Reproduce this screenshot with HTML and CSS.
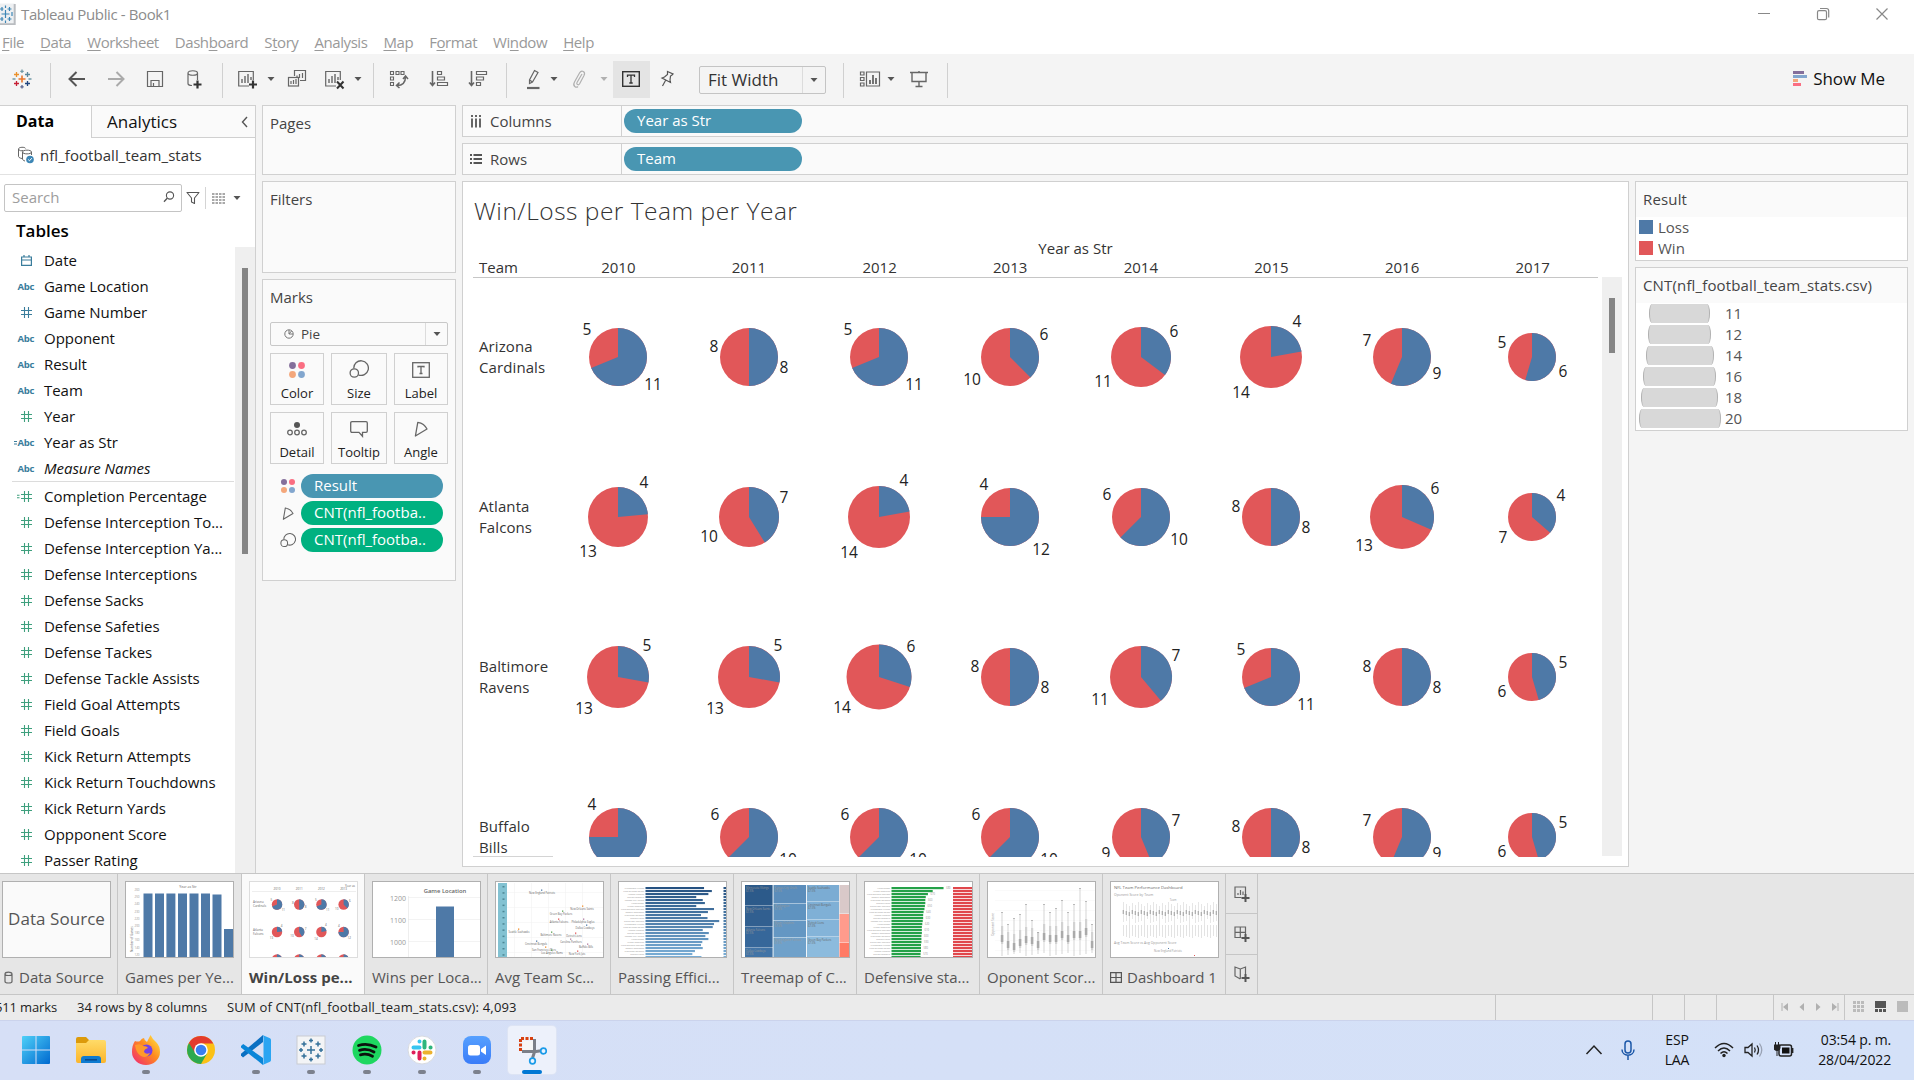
FILE: index.html
```html
<!DOCTYPE html>
<html lang="en">
<head>
<meta charset="utf-8">
<title>Tableau Public - Book1</title>
<link rel="stylesheet" href="styles.css">
</head>
<body>
<svg class="defs" width="0" height="0" aria-hidden="true">
  <defs>
    <linearGradient id="gWin" x1="0" y1="0" x2="1" y2="1"><stop offset="0" stop-color="#4fd0f8"/><stop offset="1" stop-color="#0069cf"/></linearGradient>
    <linearGradient id="gFold" x1="0" y1="0" x2="0" y2="1"><stop offset="0" stop-color="#ffdb68"/><stop offset="1" stop-color="#fbb52b"/></linearGradient>
    <linearGradient id="gFox" x1="1" y1="0" x2="0" y2="1"><stop offset="0" stop-color="#fff04a"/><stop offset=".45" stop-color="#ff8b1e"/><stop offset="1" stop-color="#f0207a"/></linearGradient>
    <linearGradient id="gZoom" x1="0" y1="0" x2="0" y2="1"><stop offset="0" stop-color="#56a0ff"/><stop offset="1" stop-color="#3a7cf8"/></linearGradient>
    <symbol id="dots" viewBox="0 0 18 18"><circle cx="4.500" cy="4.500" r="3.400" fill="#846f9b"/><circle cx="13.500" cy="4.500" r="3.400" fill="#fa6e82"/><circle cx="4.500" cy="13.500" r="3.400" fill="#f4a77b"/><circle cx="13.500" cy="13.500" r="3.400" fill="#82a6ce"/></symbol>
    <symbol id="size" viewBox="0 0 20 20"><g fill="none" stroke="#666" stroke-width="1.300"><path d="M4.800 9.500A7.300 7.300 0 1 1 9.300 15.800"/><circle cx="5.300" cy="14" r="4.200"/></g></symbol>
    <symbol id="angle" viewBox="0 0 18 18"><path d="M5.800 2.300C10 3 13.300 5.500 15 9L3.400 16Z" fill="none" stroke="#666" stroke-width="1.300" stroke-linejoin="round"/></symbol>
    <symbol id="caret" viewBox="0 0 10 6"><path d="M1.500 1H8.500L5 5Z" fill="currentColor"/></symbol>
    <symbol id="sheet" viewBox="0 0 22 22"><path d="M13 18H2.700V3.500H17.300V12" fill="none" stroke="#666" stroke-width="1.200"/><path d="M6 15v-4M9 15V8M12 15V6M15 12V9" stroke="#666" stroke-width="1.400"/></symbol>
  </defs>
</svg>

<header class="titlebar">
  <svg class="app-icon" width="16" height="22" viewBox="0 0 16 22"><path d="M0 .5H14.500V21H0" fill="#eef0f2"/><path d="M14.700 1V21.300H0" fill="none" stroke="#b9bcc0" stroke-width="2"/><path d="M5.500 7v8M1.500 11h8M2 4v4M0 6h3.500M9.500 4v4M7.500 6h4M2 14v4M0 16h3.500M9.500 14v4M7.500 16h4M12 9v4M5.500 2.500v2.500M5.500 17.500v2.500" stroke="#3c86b5" stroke-width="1.200"/></svg>
  <span class="app-title">Tableau Public - Book1</span>
  <div class="win-buttons">
    <svg width="14" height="14" viewBox="0 0 14 14"><path d="M1 6.500H13" stroke="#888" stroke-width="1"/></svg>
    <svg width="14" height="14" viewBox="0 0 14 14" fill="none" stroke="#888" stroke-width="1.200"><rect x="1.500" y="3.700" width="9" height="9" rx="1.500"/><path d="M4 1.500H10.500A2.300 2.300 0 0 1 12.700 3.800V10.500"/></svg>
    <svg width="14" height="14" viewBox="0 0 14 14"><path d="M1.500 1.500L12.500 12.500M12.500 1.500L1.500 12.500" stroke="#888" stroke-width="1.200"/></svg>
  </div>
</header>
<nav class="menubar">
  <span><u>F</u>ile</span><span><u>D</u>ata</span><span><u>W</u>orksheet</span><span>Dash<u>b</u>oard</span><span>S<u>t</u>ory</span><span><u>A</u>nalysis</span><span><u>M</u>ap</span><span>F<u>o</u>rmat</span><span>Wi<u>n</u>dow</span><span><u>H</u>elp</span>
</nav>

<div class="toolbar">
  <svg class="ic m11" viewBox="0 0 22 22" stroke-width="1.300"><path d="M11 7.500v7M7.500 11h7" stroke="#e8762c" stroke-width="1.600"/><path d="M5.500 4v5M3 6.500h5" stroke="#eb912b"/><path d="M16.500 4v5M14 6.500h5" stroke="#59879b"/><path d="M5.500 13v5M3 15.500h5" stroke="#c72035"/><path d="M16.500 13v5M14 15.500h5" stroke="#1f447e"/><path d="M11 1.500v3.500M9.300 3.300h3.400M1.500 11h3M17.500 11h3" stroke="#7099a6"/><path d="M11 17v3.500M9.300 18.800h3.400" stroke="#5b6591"/></svg>
  <i class="sep m17"></i>
  <svg class="ic m15" viewBox="0 0 22 22"><path d="M19 11H4M10.500 4L3.500 11L10.500 18" fill="none" stroke="#555" stroke-width="2"/></svg>
  <svg class="ic m17" viewBox="0 0 22 22"><path d="M3 11H18M11.500 4L18.500 11L11.500 18" fill="none" stroke="#aaa" stroke-width="2"/></svg>
  <svg class="ic m17" viewBox="0 0 22 22"><path d="M3.500 3.500H18.500V18.500H3.500ZM7 18V12.500H15V18M9.500 18V15" fill="none" stroke="#666" stroke-width="1.200"/></svg>
  <svg class="ic m17" viewBox="0 0 22 22"><path d="M9 17.500C6 17.500 5 16 5 15.500V5C5 2 14.500 2 14.500 5V12M5 5C5 8 14.500 8 14.500 5" fill="none" stroke="#666" stroke-width="1.200"/><path d="M14.500 12.500v8M10.500 16.500h8" stroke="#333" stroke-width="2.200"/></svg>
  <i class="sep m17"></i>
  <svg class="ic m13" viewBox="0 0 22 22"><use href="#sheet" width="22" height="22"/><path d="M17 12.500v8M13 16.500h8" stroke="#333" stroke-width="2.200"/></svg>
  <svg class="ct m8"><use href="#caret"/></svg>
  <svg class="ic m9" viewBox="0 0 22 22" fill="none" stroke="#666" stroke-width="1.200"><path d="M9.500 8V2.500H20.500V12.500H15"/><rect x="3.500" y="9.500" width="10" height="8.500"/><path d="M12 10V7.500M14.500 10V6M17.500 10V5M6 16v-3M8.500 16v-4M11 16v-5"/></svg>
  <svg class="ic m16" viewBox="0 0 22 22"><use href="#sheet" width="22" height="22"/><path d="M14 13.500l6.500 7M20.500 13.500l-6.500 7" stroke="#333" stroke-width="2"/></svg>
  <svg class="ct m8"><use href="#caret"/></svg>
  <i class="sep m10"></i>
  <svg class="ic m14" viewBox="0 0 22 22" fill="none" stroke="#666" stroke-width="1.100"><path d="M2.500 3.500h3v3h-3ZM8 3.500h3v3h-3ZM13 3.500h3v3h-3ZM2.500 9h3v3h-3ZM2.500 14.500h3v3h-3Z"/><path d="M9 17.500C15 17.500 17.500 14 17.500 8.500M15 11L17.500 8L20 11M11.500 14.500L8.500 17.500L11.500 20" stroke-width="1.500"/></svg>
  <svg class="ic m18" viewBox="0 0 22 22" fill="none" stroke="#666" stroke-width="1.200"><path d="M4.500 3v14M2 14.500L4.500 17.500L7 14.500" stroke-width="1.600"/><path d="M9.500 3.500h4v3h-4ZM9.500 9h7v3h-7ZM9.500 14.500h10v3h-10Z"/></svg>
  <svg class="ic m17" viewBox="0 0 22 22" fill="none" stroke="#666" stroke-width="1.200"><path d="M4.500 3v14M2 14.500L4.500 17.500L7 14.500" stroke-width="1.600"/><path d="M9.500 3.500h10v3h-10ZM9.500 9h7v3h-7ZM9.500 14.500h4v3h-4Z"/></svg>
  <i class="sep m17"></i>
  <svg class="ic m15" viewBox="0 0 22 22"><path d="M12.500 2.500L16 4.500L10.500 14L7.500 15.500L7.500 12ZM7.500 12L10.500 14" fill="none" stroke="#666" stroke-width="1.200"/><path d="M5 20H17.500" stroke="#666" stroke-width="2.200"/></svg>
  <svg class="ct m5"><use href="#caret"/></svg>
  <svg class="ic m9" viewBox="0 0 22 22"><path d="M14 6L9 14.500C8 16.500 10.500 17.500 11.500 16L16 7.500C18 3.500 13.500 1.500 11.500 5L6.500 14C4 18.500 8.500 20 10 18.500" fill="none" stroke="#b0b0b0" stroke-width="1.200"/></svg>
  <svg class="ct off m9"><use href="#caret"/></svg>
  <span class="tbtn m4"><svg width="18" height="16" viewBox="0 0 18 16"><rect x=".7" y=".7" width="16.600" height="14.600" fill="none" stroke="#333" stroke-width="1.400"/><path d="M5.500 6V4.200H12.500V6M9 4.200V12M7.300 12h3.400" fill="none" stroke="#333" stroke-width="1.300"/></svg></span>
  <svg class="ic m6" viewBox="0 0 22 22"><path d="M11.500 3.500L17 6L16 7L14.500 8L14 12L14.500 14.500L6 10L8.500 9L11.500 6.500ZM9.500 12.500L6.500 18" fill="none" stroke="#555" stroke-width="1.200"/></svg>
  <span class="fit m21"><span>Fit Width</span><b><svg class="ct"><use href="#caret"/></svg></b></span>
  <i class="sep m17"></i>
  <svg class="ic m15" viewBox="0 0 22 22" fill="none" stroke="#666" stroke-width="1.200"><path d="M1.500 4h3.500v3h-3.500ZM1.500 9.500h3.500v3h-3.500ZM1.500 15h3.500v3h-3.500ZM7.500 4h13v14h-13Z"/><path d="M11 16v-4M14 16V7M17 16v-6" stroke-width="1.800"/></svg>
  <svg class="ct m5"><use href="#caret"/></svg>
  <svg class="ic m12" viewBox="0 0 22 22" fill="none" stroke="#666" stroke-width="1.400"><path d="M2 4.500H20M4 5V13.500H18V5M11 13.500V18.500M7.500 18.500H14.500"/><path d="M11 3v1.500"/></svg>
  <i class="sep m17"></i>
  <span class="showme"><svg width="14" height="15" viewBox="0 0 14 15"><path fill="#846f9b" d="M0 0h11v3H0z"/><path fill="#82a6ce" d="M0 4h14v3H0z"/><path fill="#f4a77b" d="M0 8h5v3H0z"/><path fill="#fa6e82" d="M0 12h8v3H0z"/></svg>Show Me</span>
</div>

<main class="work">
  <section class="datapane">
    <div class="tabs"><b>Data</b><span class="an">Analytics<svg width="7" height="12" viewBox="0 0 7 12"><path d="M6 1L1.500 6L6 11" fill="none" stroke="#555" stroke-width="1.400"/></svg></span></div>
    <div class="source"><svg width="18" height="18" viewBox="0 0 18 18" fill="none" stroke="#666"><path d="M5 12.500C2 12 1.500 11 1.500 10V3C1.500 .8 8.500 .8 8.500 2.500M1.500 3C2 5 5 5 6 4.500"/><path d="M8 15C6 14.500 5.500 13.500 5.500 13V6C5.500 3.500 14.500 3.500 14.500 6V9M5.500 6C5.500 8.500 14.500 8.500 14.500 6"/><circle cx="13" cy="13.500" r="3.800" fill="#3c86b5" stroke="none"/><path d="M11.200 13.500l1.300 1.300 2.300-2.600" stroke="#fff"/></svg><span>nfl_football_team_stats</span></div>
    <div class="searchrow">
      <div class="search"><span>Search</span><svg width="12" height="12" viewBox="0 0 12 12"><circle cx="7" cy="4.500" r="3.600" fill="none" stroke="#555" stroke-width="1.100"/><path d="M4.200 7.200L1 10.800" stroke="#555" stroke-width="1.300"/></svg></div>
      <svg class="funnel" width="14" height="14" viewBox="0 0 14 14"><path d="M1 1.500H13L8.500 7V12.500L5.500 11V7Z" fill="none" stroke="#555" stroke-width="1.100" stroke-linejoin="round"/></svg>
      <i></i>
      <svg width="13" height="11" viewBox="0 0 13 11"><path d="M0 1h13M0 4h13M0 7h13M0 10h13" stroke="#555" stroke-width="1.100" stroke-dasharray="2.500 1"/></svg>
      <svg class="ct"><use href="#caret"/></svg>
    </div>
    <h2>Tables</h2>
    <div class="fieldwrap"><div class="fields" id="fields"></div><div class="track"><i></i></div></div>
  </section>

  <section class="cards">
    <div class="card pages">Pages</div>
    <div class="card filters">Filters</div>
    <div class="card marks">
      <h3>Marks</h3>
      <div class="pie-select"><svg width="10" height="10" viewBox="0 0 10 10" fill="none" stroke="#777"><circle cx="5" cy="5" r="4.200"/><path d="M5 1V5H9M5 5L7.500 2"/></svg><span>Pie</span><b><svg class="ct"><use href="#caret"/></svg></b></div>
      <div class="mark-grid">
        <div><svg width="18" height="18"><use href="#dots"/></svg>Color</div>
        <div><svg width="20" height="20"><use href="#size"/></svg>Size</div>
        <div><svg width="18" height="18" viewBox="0 0 18 18" fill="none" stroke="#666" stroke-width="1.300"><rect x=".7" y="1.700" width="16.600" height="14.600"/><path d="M6 6.500V5.500H12V6.500M9 5.500V12.500M7.500 12.500h3"/></svg>Label</div>
        <div><svg width="20" height="18" viewBox="0 0 20 18" fill="none" stroke="#666" stroke-width="1.300"><circle cx="10" cy="5" r="3" fill="#555" stroke="none"/><circle cx="3" cy="12.500" r="2.300"/><circle cx="10" cy="12.500" r="2.300"/><circle cx="17" cy="12.500" r="2.300"/></svg>Detail</div>
        <div><svg width="18" height="18" viewBox="0 0 18 18"><path d="M2 1.700H16Q17.300 1.700 17.300 3V11Q17.300 12.300 16 12.300H12.500V16.300L9 12.300H2Q.7 12.300 .7 11V3Q.7 1.700 2 1.700Z" fill="none" stroke="#666" stroke-width="1.300"/></svg>Tooltip</div>
        <div><svg width="18" height="18"><use href="#angle"/></svg>Angle</div>
      </div>
      <div class="mark-pill"><svg width="16" height="16"><use href="#dots"/></svg><span class="blue">Result</span></div>
      <div class="mark-pill"><svg width="15" height="15"><use href="#angle"/></svg><span class="green">CNT(nfl_footba..</span></div>
      <div class="mark-pill"><svg width="16" height="16"><use href="#size"/></svg><span class="green">CNT(nfl_footba..</span></div>
    </div>
  </section>

  <section class="sheet">
    <div class="shelf"><div class="shelf-name"><svg width="12" height="13" viewBox="0 0 12 13"><path d="M2 0v2M6 0v2M10 0v2M2 3.500v9M6 3.500v9M10 3.500v9" stroke="#555" stroke-width="1.800"/></svg>Columns</div><span class="pill">Year as Str</span></div>
    <div class="shelf"><div class="shelf-name"><svg width="12" height="12" viewBox="0 0 12 12"><path d="M0 2h2M0 6h2M0 10h2M3.500 2h9M3.500 6h9M3.500 10h9" stroke="#555" stroke-width="1.800"/></svg>Rows</div><span class="pill">Team</span></div>
    <div class="split">
      <div class="viz">
        <h1>Win/Loss per Team per Year</h1>
        <div class="colfield">Year as Str</div>
        <div class="colheads"><span class="team">Team</span><span>2010</span><span>2011</span><span>2012</span><span>2013</span><span>2014</span><span>2015</span><span>2016</span><span>2017</span></div>
        <div class="bodywrap"><div class="rows" id="rows"></div><div class="vtrack"><i></i></div></div>
      </div>
      <aside class="legends">
        <div class="legend result"><h4>Result</h4><p><i class="loss"></i>Loss</p><p><i class="win"></i>Win</p></div>
        <div class="legend sizes"><h4>CNT(nfl_football_team_stats.csv)</h4><div id="sizes"></div></div>
      </aside>
    </div>
  </section>
</main>

<div class="sheettabs">
  <div class="tab first"><div class="thumb ds">Data Source</div><p><svg width="9" height="13" viewBox="0 0 9 13" fill="none" stroke="#666" stroke-width="1.200"><path d="M1 3V10.500C1 12.500 8 12.500 8 10.500V3C8 .5 1 .5 1 3C1 5 8 5 8 3"/></svg>Data Source</p></div>
  <div class="tab second"><svg class="thumb" id="t1"></svg><p>Games per Ye...</p></div>
  <div class="tab on"><svg class="thumb" id="t2"></svg><p>Win/Loss pe...</p></div>
  <div class="tab"><svg class="thumb" id="t3"></svg><p>Wins per Loca...</p></div>
  <div class="tab"><svg class="thumb" id="t4"></svg><p>Avg Team Sc...</p></div>
  <div class="tab"><svg class="thumb" id="t5"></svg><p>Passing Effici...</p></div>
  <div class="tab"><svg class="thumb" id="t6"></svg><p>Treemap of C...</p></div>
  <div class="tab"><svg class="thumb" id="t7"></svg><p>Defensive sta...</p></div>
  <div class="tab"><svg class="thumb" id="t8"></svg><p>Oponent Scor...</p></div>
  <div class="tab"><svg class="thumb" id="t9"></svg><p><svg width="12" height="11" viewBox="0 0 12 11" fill="none" stroke="#555" stroke-width="1.200"><path d="M.6 .6h10.800v9.800H.6ZM6 .6v9.800M.6 5.500h10.800"/></svg>Dashboard 1</p></div>
  <div class="adders">
    <span><svg width="16" height="16" viewBox="0 0 16 16" fill="none" stroke="#666" stroke-width="1.200"><path d="M7.500 11.500H1V1H11.500V8M4 9V7M6.500 9V4M9 9V5.500"/><path d="M11.500 8v8M7.500 12h8" stroke="#555" stroke-width="2"/></svg></span>
    <span><svg width="16" height="16" viewBox="0 0 16 16" fill="none" stroke="#666" stroke-width="1.200"><path d="M7.500 11.500H1V1H11.500V8M1 6.300H11.500M6.300 1v10.500"/><path d="M11.500 8v8M7.500 12h8" stroke="#555" stroke-width="2"/></svg></span>
    <span><svg width="16" height="16" viewBox="0 0 16 16" fill="none" stroke="#666" stroke-width="1.200"><path d="M6.300 3L1 1V10L6.300 13M6.300 3L11.500 1V8M6.300 3V13"/><path d="M11.500 8v8M7.500 12h8" stroke="#555" stroke-width="2"/></svg></span>
  </div>
</div>

<div class="status">
  <span class="s1">511 marks</span><span class="s2">34 rows by 8 columns</span><span class="s3">SUM of CNT(nfl_football_team_stats.csv): 4,093</span>
  <div class="boxes"><i class="b1"></i><i class="b2"></i><i class="b2"></i><i class="b3"></i>
    <span class="navs"><svg width="8" height="8" viewBox="0 0 8 8"><path d="M1 0v8" stroke="#b0b0b0"/><path d="M7 0v8L2 4z"/></svg><svg width="8" height="8" viewBox="0 0 8 8"><path d="M6 0v8L1.500 4z"/></svg><svg width="8" height="8" viewBox="0 0 8 8"><path d="M2 0v8L6.500 4z"/></svg><svg width="8" height="8" viewBox="0 0 8 8"><path d="M7 0v8" stroke="#b0b0b0"/><path d="M1 0v8L6 4z"/></svg></span>
    <span class="views"><svg width="11" height="11" viewBox="0 0 11 11"><path d="M0 0h3v3H0zM4 0h3v3H4zM8 0h3v3H8zM0 4h3v3H0zM4 4h3v3H4zM8 4h3v3H8zM0 8h3v3H0zM4 8h3v3H4zM8 8h3v3H8z" fill="#bbb"/></svg><svg width="11" height="11" viewBox="0 0 11 11"><path d="M0 0h11v7H0zM0 8h3v3H0zM4 8h3v3H4zM8 8h3v3H8z" fill="#555"/></svg><svg width="11" height="11" viewBox="0 0 11 11"><path d="M0 0h11v11H0z" fill="#bbb"/></svg></span>
  </div>
</div>

<footer class="taskbar">
  <div class="apps">
    <span><svg viewBox="0 0 30 30"><path fill="url(#gWin)" d="M1 2Q1 1 2 1H14.500V14.500H1ZM15.500 1H28Q29 1 29 2V14.500H15.500ZM1 15.500H14.500V29H2Q1 29 1 28ZM15.500 15.500H29V28Q29 29 28 29H15.500Z"/></svg></span>
    <span><svg viewBox="0 0 30 30"><path d="M0 4Q0 2 2 2H10L13 5H28V12H0Z" fill="#dc9a0a"/><path d="M0 8H10L13 5H28Q30 5 30 7V26Q30 28 28 28H2Q0 28 0 26Z" fill="url(#gFold)"/><path d="M5 28V24Q5 21 8 21H22Q25 21 25 24V28Z" fill="#0f7bd0"/><path d="M9 24.800H21" stroke="#0a4a8c" stroke-width="1.500"/></svg></span>
    <span class="run"><svg viewBox="0 0 30 30"><path d="M4 6Q7 7 9 6Q11 3 13 3Q13 5 16 7Q18 3 19.500 0Q22 5 25 7Q29 11 29 17A14 13 0 0 1 1 17Q1 10 4 6Z" fill="url(#gFox)"/><circle cx="15.500" cy="15.500" r="6" fill="#7542e5"/><path d="M4 10Q10 8 12 11Q16 11 17 13Q13 14 13 17Q15 20 19 18Q16 24 10 21Q5 18 4 10Z" fill="#ff9a2a"/></svg></span>
    <span><svg viewBox="0 0 30 30"><circle cx="15" cy="15" r="14" fill="#fbc116"/><path d="M15 15L2.900 8A14 14 0 0 0 15 29L21 18.500Z" fill="#2da94f"/><path d="M15 8.500H27.300A14 14 0 0 0 2.900 8L9.500 18.500Z" fill="#e33b2e"/><circle cx="15" cy="15" r="6.800" fill="#fff"/><circle cx="15" cy="15" r="5.300" fill="#3a7ff0"/></svg></span>
    <span class="run"><svg viewBox="0 0 30 30"><path d="M0 20.500L2 22.500L22 7V0L0 18.800Z" fill="#0a6fc2"/><path d="M0 11L2.200 9L22 23V30L0 12.500Z" fill="#0a86d8"/><path d="M21.500 0L29 3.200Q30 3.700 30 5V25Q30 26.300 29 26.800L21.500 30Q22.500 29 22.500 27V3Q22.500 1 21.500 0Z" fill="#2aa5f2"/></svg></span>
    <span class="run"><svg viewBox="0 0 30 30"><rect x="1" y="1" width="28" height="28" fill="#f3f4f6" stroke="#c9ccd2"/><path d="M15 11v8M11 15h8M8 6.500v5M5.500 9h5M22 6.500v5M19.500 9h5M8 18.500v5M5.500 21h5M22 18.500v5M19.500 21h5M15 3.500v4M13 5.500h4M15 22.500v4M13 24.500h4M5 13v4M3 15h4M25 13v4M23 15h4" stroke="#33709a" stroke-width="1.500"/></svg></span>
    <span class="run"><svg viewBox="0 0 30 30"><circle cx="15" cy="15" r="14.500" fill="#1ed760"/><path d="M6.500 10.500Q15 7.500 24 12M7.500 15.300Q15 13 22 17M8.500 19.800Q15 18 20.500 21.300" fill="none" stroke="#0b120d" stroke-width="2.800" stroke-linecap="round"/></svg></span>
    <span class="run"><svg viewBox="0 0 30 30"><circle cx="15" cy="15" r="14" fill="#fff" stroke="#d7dae0"/><g stroke-width="4" stroke-linecap="round"><path d="M12.500 6.500V6.600M6.500 12.500H12.500" stroke="#36c5f0"/><path d="M17.500 6.500V12.500M23.500 12.500h.1" stroke="#2eb67d"/><path d="M17.500 17.500H23.500M17.500 23.500v.1" stroke="#ecb22e"/><path d="M12.500 17.500V23.500M6.500 17.500h.1" stroke="#e01e5a"/></g></svg></span>
    <span class="run"><svg viewBox="0 0 30 30"><rect x="1" y="1" width="28" height="28" rx="8" fill="url(#gZoom)"/><rect x="6" y="10" width="12" height="10.500" rx="2.500" fill="#fff"/><path d="M19 14L24 10.500V20L19 16.500Z" fill="#fff"/></svg></span>
    <span class="active"><svg viewBox="0 0 30 30"><path d="M4 3.500H16M3.500 4V16" fill="none" stroke="#d8400f" stroke-width="3" stroke-dasharray="3 1.500"/><rect x="6" y="6" width="11" height="10" fill="#f6f6f6"/><path d="M17.500 4V17L15.500 23M5 16.500H19L26 15.500" fill="none" stroke="#7b7f88" stroke-width="3"/><circle cx="26.500" cy="16" r="2.800" fill="#e9f3ff" stroke="#1b9be8" stroke-width="1.700"/><circle cx="15.500" cy="26" r="2.800" fill="#e9f3ff" stroke="#1b9be8" stroke-width="1.700"/></svg></span>
  </div>
  <div class="tray">
    <svg class="chev" width="18" height="12" viewBox="0 0 18 12"><path d="M1.500 10L9 2L16.500 10" fill="none" stroke="#222" stroke-width="1.500"/></svg>
    <svg class="mic" width="14" height="20" viewBox="0 0 14 20"><rect x="4" y="1" width="6" height="12" rx="3" fill="none" stroke="#1b57a8" stroke-width="1.500"/><path d="M1 9.500C1 17 13 17 13 9.500M7 15.500V20" fill="none" stroke="#1b57a8" stroke-width="1.500"/></svg>
    <span class="lang">ESP<br>LAA</span>
    <svg class="wifi" width="20" height="16" viewBox="0 0 20 16"><path d="M1 6Q10 -3 19 6M4 9Q10 3 16 9M6.500 11.500Q10 8 13.500 11.500" fill="none" stroke="#222" stroke-width="1.500"/><circle cx="10" cy="13.500" r="1.700" fill="#222"/></svg>
    <svg class="vol" width="20" height="16" viewBox="0 0 20 16" fill="none" stroke="#222" stroke-width="1.300"><path d="M1 5.500H4L8 2V14L4 10.500H1ZM10.500 5.500Q12 8 10.500 10.500M13 3.500Q16 8 13 12.500"/><path d="M15.500 1.500Q20 8 15.500 14.500" stroke="#9aa3b5"/></svg>
    <svg class="bat" width="20" height="16" viewBox="0 0 20 16"><rect x="5" y="3" width="12.500" height="11" rx="2" fill="none" stroke="#222" stroke-width="1.500"/><rect x="8" y="5.500" width="7.500" height="6" fill="#111"/><path d="M18.500 6v5" stroke="#222" stroke-width="1.800"/><path d="M0 3h6v3q0 2.500-3 2.500T0 6ZM1.500 0v3M4.500 0v3M3 8v6" fill="#222" stroke="#222"/></svg>
    <span class="clock">03:54 p. m.<br>28/04/2022</span>
  </div>
</footer>
<script src="app.js"></script>
</body>
</html>
```
FILE: styles.css
```css
* { box-sizing: border-box; margin: 0; padding: 0; }
body { width: 1914px; height: 1080px; overflow: hidden; background: #f4f4f4; color: #333; font-family: "Open Sans", "Liberation Sans", sans-serif; font-size: 15px; display: flex; flex-direction: column; }
.defs { position: absolute; }
svg { flex: none; display: block; }
i { font-style: normal; display: block; }
span, p { white-space: nowrap; }

.titlebar { height: 30px; background: #fff; display: flex; align-items: center; flex: none; }
.app-icon { margin-top: -2px; }
.app-title { margin-left: 5px; font-size: 15px; color: #8c8c8c; letter-spacing: -.38px; margin-top: -3px; }
.win-buttons { margin-left: auto; display: flex; gap: 45px; padding-right: 25px; margin-top: -2px; }
.menubar { height: 24px; background: #fff; display: flex; gap: 16px; padding-left: 2px; color: #999; font-size: 15px; line-height: 25px; letter-spacing: -.43px; flex: none; }
.menubar u { text-underline-offset: 2px; }

.toolbar { height: 51px; display: flex; align-items: center; flex: none; padding: 0 29px 1px 0; }
.ic { width: 22px; height: 22px; }
.ct { width: 10px; height: 6px; color: #555; }
.ct.off { color: #b0b0b0; }
.sep { width: 1px; height: 35px; background: #d0d0d0; margin-top: 2px; }
.m4 { margin-left: 4px; } .m5 { margin-left: 5px; } .m6 { margin-left: 6px; } .m8 { margin-left: 8px; }
.m9 { margin-left: 9px; } .m10 { margin-left: 10px; } .m11 { margin-left: 11px; } .m12 { margin-left: 12px; }
.m13 { margin-left: 13px; } .m14 { margin-left: 14px; } .m15 { margin-left: 15px; } .m16 { margin-left: 16px; }
.m17 { margin-left: 17px; } .m18 { margin-left: 18px; } .m21 { margin-left: 21px; }
.tbtn { width: 37px; height: 37px; background: #e4e4e4; display: flex; align-items: center; justify-content: center; padding-right: 1px; }
.fit { width: 127px; height: 28px; border: 1px solid #c4c4c4; border-radius: 2px; display: flex; align-items: center; font-size: 17px; color: #333; padding-left: 8px; margin-top: 1px; }
.fit > span { margin-top: -1px; }
.fit b { margin-left: auto; width: 23px; height: 26px; border-left: 1px solid #dcdcdc; display: flex; align-items: center; justify-content: center; }
.showme { margin-left: auto; display: flex; align-items: center; gap: 6px; color: #111; font-size: 17px; margin-top: -1px; letter-spacing: -.1px; }

.work { height: 768px; display: flex; flex: none; }
.datapane { width: 256px; background: #fff; border-right: 1px solid #d0d0d0; border-top: 1px solid #d0d0d0; display: flex; flex-direction: column; overflow: hidden; }
.tabs { display: flex; height: 32px; flex: none; }
.tabs b { width: 91px; padding-left: 16px; font-size: 16px; line-height: 30px; color: #000; }
.tabs .an { flex: 1; display: flex; align-items: center; justify-content: space-between; padding: 0 7px 0 15px; background: #fafafa; border-left: 1px solid #d0d0d0; border-bottom: 1px solid #d0d0d0; font-size: 17px; color: #111; }
.source { height: 37px; flex: none; border-bottom: 1px solid #e2e2e2; display: flex; align-items: center; gap: 5px; padding: 0 0 2px 17px; letter-spacing: .05px; }
.searchrow { display: flex; align-items: center; height: 28px; margin: 9px 0 0 4px; flex: none; }
.search { width: 178px; height: 28px; border: 1px solid #c4c4c4; border-radius: 2px; display: flex; align-items: center; justify-content: space-between; padding: 0 6px 2px 7px; color: #9d9d9d; }
.funnel { margin-left: 4px; }
.searchrow i { width: 1px; height: 22px; background: #d4d4d4; margin: 0 6px 0 5px; }
.searchrow .ct { margin-left: 7px; }
h2 { font-size: 17px; font-weight: 600; color: #000; padding-left: 16px; height: 35px; line-height: 37px; flex: none; }
.fieldwrap { display: flex; flex: 1; min-height: 0; }
.fields { width: 235px; overflow: hidden; }
.field { height: 26px; display: flex; align-items: center; color: #111; letter-spacing: -.04px; }
.field.split-after { height: 28px; padding-bottom: 2px; background: linear-gradient(#dcdcdc, #dcdcdc) 12px 26px / 222px 1px no-repeat; }
.field .fi { width: 44px; padding-right: 10px; display: flex; justify-content: flex-end; align-items: center; font-size: 9.500px; font-weight: 700; color: #3a7d9c; letter-spacing: -.3px; flex: none; }
.field .fi svg { margin-right: 2px; color: #3a7d9c; }
.field .fi.g svg { color: #3fa07e; }
.field em { font-style: italic; }
.track { width: 20px; background: #efefef; padding: 21px 0 0 7px; }
.track i { width: 6px; height: 286px; background: #858585; }

.cards { width: 194px; margin-left: 6px; display: flex; flex-direction: column; gap: 6px; }
.card { border: 1px solid #d0d0d0; background: #fafafa; padding: 7px 7px; color: #444; line-height: 20px; }
.pages { height: 70px; }
.filters { height: 92px; }
.marks { height: 302px; padding-top: 0; }
h3 { font-size: 15px; font-weight: 400; height: 42px; line-height: 34px; }
.pie-select { height: 24px; border: 1px solid #c8c8c8; border-radius: 2px; width: 178px; display: flex; align-items: center; font-size: 13.500px; padding-left: 13px; gap: 7px; }
.pie-select b { margin-left: auto; width: 22px; height: 22px; border-left: 1px solid #dcdcdc; display: flex; align-items: center; justify-content: center; }
.mark-grid { display: grid; grid-template-columns: 54px 56px 54px; gap: 7px; margin-top: 7px; }
.mark-grid div { height: 52px; border: 1px solid #d0d0d0; display: flex; flex-direction: column; align-items: center; justify-content: flex-end; font-size: 13px; color: #222; line-height: 17px; padding-bottom: 2px; gap: 6px; }
.mark-grid + .mark-pill { margin-top: 10px; }
.mark-pill { display: flex; align-items: center; height: 24px; margin-bottom: 3px; }
.mark-pill svg { width: 16px; margin: 0 5px 0 10px; }
.mark-pill span, .pill { height: 24px; border-radius: 12px; color: #fff; line-height: 23px; padding-left: 13px; font-weight: 500; }
.mark-pill span { width: 142px; }
.blue, .pill { background: #4996b2; }
.green { background: #00b180; }

.sheet { margin-left: 6px; width: 1446px; display: flex; flex-direction: column; gap: 6px; }
.shelf { height: 32px; border: 1px solid #d0d0d0; background: #fafafa; display: flex; align-items: center; flex: none; }
.shelf-name { width: 159px; height: 30px; border-right: 1px solid #d0d0d0; display: flex; align-items: center; gap: 8px; padding-left: 7px; color: #444; }
.pill { width: 178px; margin-left: 2px; font-size: 15px; }
.split { display: flex; gap: 6px; }
.viz { width: 1167px; height: 686px; border: 1px solid #d0d0d0; background: #fff; padding-left: 10px; }
h1 { font-size: 24.500px; font-weight: 300; height: 56px; line-height: 57px; color: #333; padding-left: 1px; letter-spacing: .5px; }
.colfield { width: 1125px; padding-left: 80px; text-align: center; height: 20px; line-height: 20px; }
.colheads { display: grid; grid-template-columns: 80px repeat(8, 1fr); width: 1125px; height: 20px; line-height: 19px; text-align: center; border-bottom: 1px solid #c6c6c6; }
.colheads .team { text-align: left; padding-left: 6px; }
.bodywrap { display: flex; gap: 4px; }
.rows { width: 1125px; height: 579px; overflow: hidden; background: linear-gradient(#d4d4d4, #d4d4d4) 0 578px / 80px 1px no-repeat; }
.row { display: grid; grid-template-columns: 80px repeat(8, 1fr); height: 160px; align-items: center; }
.row:first-child { margin-top: -1px; }
.row .name { padding: 0 0 1px 6px; line-height: 21px; white-space: pre-line; letter-spacing: .1px; }
.row svg { width: 130px; height: 160px; overflow: visible; }
.row svg text { font-size: 15.500px; text-anchor: middle; fill: #222; }
.vtrack { width: 20px; height: 579px; margin-top: -1px; background: #efefef; padding: 21px 0 0 7px; }
.vtrack i { width: 6px; height: 55px; background: #858585; }

.legends { width: 273px; display: flex; flex-direction: column; gap: 6px; }
.legend { border: 1px solid #d0d0d0; background: #fff; }
.legend h4 { font-size: 15px; font-weight: 400; height: 35px; line-height: 35px; padding-left: 7px; background: #fafafa; color: #444; letter-spacing: .15px; white-space: nowrap; }
.result { height: 80px; }
.sizes { height: 164px; }
.result p { display: flex; align-items: center; gap: 5px; height: 21px; line-height: 20px; padding: 0 0 1px 3px; color: #555; }
.result i { width: 14px; height: 14px; }
.loss { background: #4e79a7; }
.win { background: #e15759; }
.sizeitem { height: 21px; display: flex; align-items: center; color: #555; padding-bottom: 1px; }
.sizeitem span { width: 89px; display: flex; justify-content: center; padding-right: 2px; }
.sizeitem i { height: 19px; background: #d8d8d8; border: solid #b0b0b0; border-width: 0 1.500px; border-radius: 3px / 50%; flex: none; }

.sheettabs { height: 122px; border-top: 1px solid #c6c6c6; border-bottom: 1px solid #c6c6c6; background: #e6e6e6; display: flex; flex: none; }
.tab { width: 123px; border-right: 1px solid #c6c6c6; padding: 7px 0 0 7px; }
.tab.first { width: 118px; padding-left: 2px; }
.tab.second { width: 124px; }
.tab.on { background: #fafafa; }
.thumb { width: 109px; height: 77px; border: 1px solid #b0b0b0; background: #fff; }
.on .thumb { border-color: #ddd; }
.thumb text { fill: #999; }
.thumb .strong text { fill: #666; }
.ds { background: #fafafa; font-size: 17px; color: #555; line-height: 74px; text-align: center; letter-spacing: .05px; white-space: nowrap; }
.tab p { height: 38px; line-height: 38px; color: #555; display: flex; align-items: center; gap: 5px; font-size: 15px; }
.first p { padding-left: 2px; gap: 6px; }
.on p { font-weight: 700; color: #444; letter-spacing: .05px; }
.adders { width: 32px; border-right: 1px solid #c6c6c6; display: flex; flex-direction: column; }
.adders span { flex: 1; display: flex; align-items: center; justify-content: center; }
.adders span + span { border-top: 1px solid #c6c6c6; }

.status { height: 25px; background: #ebebeb; display: flex; align-items: center; flex: none; color: #222; font-size: 13px; overflow: hidden; }
.status > span { margin-top: -2px; }
.s1 { margin-left: -5px; width: 82px; letter-spacing: -.15px; }
.s2 { width: 150px; letter-spacing: -.05px; }
.s3 { letter-spacing: .18px; }
.boxes { margin-left: auto; display: flex; height: 25px; }
.boxes > * { border-left: 1px solid #c6c6c6; height: 25px; }
.b1 { width: 157px; } .b2 { width: 32px; } .b3 { width: 57px; }
.navs { width: 71px; display: flex; align-items: center; justify-content: space-between; padding: 0 5px 2px 7px; fill: #b0b0b0; }
.views { width: 70px; display: flex; align-items: center; gap: 11px; padding: 0 0 2px 8px; }

.taskbar { height: 60px; background: linear-gradient(90deg, #d6dff6, #d4e1f8); border-top: 1px solid #cbd3ec; display: flex; flex: none; color: #111; }
.apps { display: flex; gap: 7.100px; padding: 5px 0 0 12px; }
.apps span { width: 48px; height: 48px; border-radius: 4px; display: flex; flex-direction: column; align-items: center; padding-top: 9px; }
.apps svg { width: 30px; height: 30px; }
.run::after { content: ""; width: 8px; height: 4px; border-radius: 2px; background: #7c818d; margin-top: 5px; }
.apps .active { background: #edf1fb; box-shadow: 0 0 0 1px #dde4f4; }
.active::after { content: ""; width: 20px; height: 4px; border-radius: 2px; background: #0078d4; margin-top: 5px; }
.tray { margin-left: auto; display: flex; align-items: center; font-size: 14px; line-height: 20px; padding: 0 23px 2px 0; letter-spacing: -.15px; }
.mic { margin-left: 18px; }
.lang { margin-left: 27px; width: 30px; text-align: center; }
.wifi { margin-left: 22px; } .vol { margin-left: 10px; } .bat { margin-left: 10px; }
.clock { margin-left: 17px; width: 80px; text-align: right; display: flex; justify-content: flex-end; }
```
FILE: app.js
```js
const $ = (id) => document.getElementById(id);
const BLUE = '#4e79a7', RED = '#e15759';

// Data pane fields: [name, type, role]
const ABC = '<span>Abc</span>';
const HASH = '<svg width="11" height="11" viewBox="0 0 11 11"><path d="M3.500 0V11M7.500 0V11M0 3.500H11M0 7.500H11" stroke="currentColor" stroke-width="1.100"/></svg>';
const CAL = '<svg width="11" height="11" viewBox="0 0 11 11"><path d="M.6 2H10.400V10.400H.6ZM.6 5H10.400M3 0V2.500M8 0V2.500" fill="none" stroke="currentColor" stroke-width="1.200"/></svg>';
const dims = [['Date', CAL], ['Game Location', ABC], ['Game Number', HASH], ['Opponent', ABC], ['Result', ABC], ['Team', ABC], ['Year', HASH, 'g'], ['Year as Str', '<svg width="3" height="5" viewBox="0 0 3 5" style="margin:0"><path d="M0 1.500h3M0 4h3" stroke="currentColor"/></svg><span>Abc</span>'], ['<em>Measure Names</em>', ABC]];
const measures = ['Completion Percentage', 'Defense Interception To...', 'Defense Interception Ya...', 'Defense Interceptions', 'Defense Sacks', 'Defense Safeties', 'Defense Tackes', 'Defense Tackle Assists', 'Field Goal Attempts', 'Field Goals', 'Kick Return Attempts', 'Kick Return Touchdowns', 'Kick Return Yards', 'Oppponent Score', 'Passer Rating'];
const field = (n, icon, cls, last) => `<div class="field${last ? ' split-after' : ''}"><span class="fi ${cls || ''}">${icon}</span><span>${n}</span></div>`;
const EQHASH = HASH.replace('width="11"', 'width="15"').replace('0 0 11 11', '-4 0 15 11').replace('M3.500', 'M-4 4.300H-1.500M-4 6.700H-1.500M3.500');
$('fields').innerHTML = dims.map((d, i) => field(d[0], d[1], d[2], i === dims.length - 1)).join('') +
  measures.map((m, i) => field(m, i ? HASH : EQHASH, 'g')).join('');

// Pie slices start at twelve o'clock, losses first
function slices(cx, cy, r, loss, win) {
  const a = 2 * Math.PI * loss / (loss + win);
  const x = cx + r * Math.sin(a), y = cy - r * Math.cos(a), big = a > Math.PI ? 1 : 0;
  return `<circle cx="${cx}" cy="${cy}" r="${r}" fill="${RED}"/><path d="M${cx} ${cy}V${cy - r}A${r} ${r} 0 ${big} 1 ${x.toFixed(2)} ${y.toFixed(2)}Z" fill="${BLUE}"/>`;
}
// Each entry: losses, wins, then label offsets from the pie centre
const teams = [
  ['Arizona\nCardinals', [[11,5,35,28,-31,-27],[8,8,35,11,-35,-10],[11,5,35,28,-31,-27],[6,10,34,-22,-38,23],[6,11,33,-25,-38,25],[4,14,26,-35,-30,36],[9,7,35,17,-35,-16],[6,5,31,15,-30,-14]]],
  ['Atlanta\nFalcons', [[4,13,26,-34,-30,35],[7,10,35,-19,-40,20],[4,14,25,-36,-30,36],[12,4,31,33,-26,-32],[10,6,38,23,-34,-22],[8,8,35,11,-35,-10],[6,13,33,-28,-38,29],[4,7,29,-21,-29,21]]],
  ['Baltimore\nRavens', [[5,13,29,-31,-34,32],[5,13,29,-31,-34,32],[6,14,32,-30,-37,31],[8,8,35,11,-35,-10],[7,11,35,-21,-41,23],[11,5,35,28,-30,-27],[8,8,35,11,-35,-10],[5,6,31,-14,-30,15]]],
  ['Buffalo\nBills', [[12,4,null,0,-26,-32],[10,6,39,23,-34,-22],[10,6,39,23,-34,-22],[10,6,39,23,-34,-22],[7,9,35,-16,-35,17],[8,8,35,11,-35,-10],[9,7,35,17,-35,-16],[5,6,31,-14,-30,15]]]
];
const radius = { 11: 24, 16: 29, 17: 30, 18: 31, 19: 32, 20: 32.500 };
$('rows').innerHTML = teams.map(([name, pies]) => `<div class="row"><div class="name">${name}</div>` + pies.map(([l, w, lx, ly, wx, wy]) => {
  const label = (t, x, y) => x === null ? '' : `<text x="${65 + x}" y="${80 + y + 5}">${t}</text>`;
  return `<svg viewBox="0 0 130 160">${slices(65, 80, radius[l + w], l, w)}${label(l, lx, ly)}${label(w, wx, wy)}</svg>`;
}).join('') + '</div>').join('');

$('sizes').innerHTML = [[11, 61], [12, 63], [14, 68], [16, 73], [18, 77], [20, 82]].map(([n, w]) => `<div class="sizeitem"><span><i style="width:${w}px"></i></span>${n}</div>`).join('');

// Worksheet thumbnails
const rect = (x, y, w, h, f) => `<rect x="${x}" y="${y}" width="${w}" height="${h}" fill="${f}"/>`;
const txt = (x, y, s, t, a) => `<text x="${x}" y="${y}" font-size="${s}" text-anchor="${a || 'middle'}">${t}</text>`;
$('t1').innerHTML = '<g class="strong">' + txt(62, 6, 3.500, 'Year as Str') + '</g>' + [17.500,29,40.400,52,63.500,75,86.500,98].map((x, i) => rect(x, i === 7 ? 47 : i === 6 ? 12.500 : 11.500, 9, 70, BLUE)).join('') + [260,250,240,230,220,200,180,160,140,120].map((n, i) => txt(11, 9 + i * 7.200, 3, n)).join('') + '<g class="strong"><text transform="translate(7 70) rotate(-90)" font-size="3">Number of Games</text></g>';
$('t2').innerHTML = rect(2, 9, 104, .5, '#ddd') + '<g class="strong">' + txt(100, 5, 3, 'Year as') + [0,1,2,3].map(c => txt(27 + c * 22.200, 8, 3, 2010 + c) + [0,1,2].map(r => {
  const p = teams[r][1][c], x = 27 + c * 22.200, y = 22.500 + r * 27.500;
  return slices(x, y, 5.200, p[0], p[1]) + (r < 2 ? txt(x + p[2] / 5.500, y + 1 + p[3] / 5.500, 3, p[0]) + txt(x + p[4] / 5.500, y + 1 + p[5] / 5.500, 3, p[1]) : '');
}).join('')).join('') + txt(3, 21, 3, 'Arizona', 'start') + txt(3, 25, 3, 'Cardinals', 'start') + txt(3, 49, 3, 'Atlanta', 'start') + txt(3, 53, 3, 'Falcons', 'start') + '</g>';
$('t3').innerHTML = rect(35, 14, .5, 62, '#ddd') + [15,37,59].map(y => rect(35, y, 72, .5, '#e6e6e6')).join('') + rect(63, 24.500, 18, 52, BLUE) + `<g class="strong" font-weight="600">${txt(72, 10.500, 5.900, 'Game Location')}</g>` + txt(33, 19, 7, 1200, 'end') + txt(33, 40.500, 7, 1100, 'end') + txt(33, 62.500, 7, 1000, 'end');
$('t4').innerHTML = rect(2, 1, 9, 75, '#83c2d2') + [0,1,2,3,4,5,6,7,8,9,10,11].map(i => rect(6.500, 4 + i * 6.200, 2, 1.500, '#4d8795')).join('') + [18,35,52,69,86].map(x => rect(x, 1, .5, 75, '#eee')).join('') + [10,25,40,55,70].map(y => rect(11, y, 96, .5, '#f0f0f0')).join('') + '<g class="strong">' +
  [[46,12,'New England Patriots'],[86,28,'New Orleans Saints'],[65,33,'Green Bay Packers'],[63,41,'Atlanta Falcons'],[87,41,'Philadelphia Eagles'],[89,47,'Dallas Cowboys'],[23,51,'Seattle Seahawks'],[55,54,'Baltimore Ravens'],[78,55,'Detroit Lions'],[75,61,'Carolina Panthers'],[40,63,'Cincinnati Bengals'],[48,69,'San Francisco 49ers'],[56,72,'Los Angeles Rams'],[81,73,'New York Jets'],[90,66,'Buffalo Bills']].map((p, i) => txt(p[0], p[1], 2.600, p[2]) + rect(p[0] - 1 + i % 3, p[1] - 4.500, 1.300, 1.300, ['#4e79a7','#f28e2b','#59a14f','#e15759','#b07aa1'][i % 5])).join('') + '</g>';
const teamNames = ['Minnesota Vikings','New Orleans Saints','Atlanta Falcons','Dallas Cowboys','Kansas City Chiefs','Washington','Miami Dolphins','New England Patriots','Seattle Seahawks','Cincinnati Bengals','Detroit Lions','Green Bay Packers'];
const mix = (a, b, t) => 'rgb(' + a.map((v, i) => Math.round(v + (b[i] - v) * t)).join(',') + ')';
const blueAt = (i) => mix([38, 82, 130], [122, 174, 214], i / 23);
$('t5').innerHTML = [238,256,248,220,235,240,220,261,247,231,246,273,261,258,235,249,241,248,234,231,235,217,211,232].map((e, i) => rect(26.500, 5 + i * 3, (e - 103) / 2.306, 2.100, blueAt(i)) + rect(104.500, 5 + i * 3, 2.500, 2.100, blueAt(i)) + txt(25, 7 + i * 3, 2.300, teamNames[i % 12], 'end')).join('');
$('t6').innerHTML = [[3,3,28,21,'#2c5a8a'],[3,24,28,21,'#315f90'],[3,45,28,21,'#36679a'],[3,66,28,10,'#4274a6'],[31.500,3,33,18.500,'#5b8dbb'],[31.500,21.500,33,17,'#5f93c0'],[31.500,38.500,33,17,'#6497c3'],[31.500,55.500,33,21,'#6fa1ca'],[65,3,32.500,17,'#7bacd3'],[65,20,32.500,18,'#7fb0d6'],[65,38,32.500,17,'#84b4d9'],[65,55,32.500,21,'#8cbbdd'],[97.500,3,10,29,'#d9c9c9'],[97.500,32,10,29,'#ff9b8c'],[97.500,61,10,15,'#ff7b66']].map((r, i) => rect(r[0], r[1], r[2] - .4, r[3] - .4, r[4]) + (r[2] > 12 ? `<g class="${i > 7 ? 'strong' : ''}">` + txt(r[0] + 1, r[1] + 3.500, 2.700, teamNames[i % 12], 'start') + txt(r[0] + 1, r[1] + 6.500, 2.700, '67.5%', 'start') + '</g>' : '')).join('');
$('t7').innerHTML = [790,765,754,749,748,748,747,746,744,743,743,742,741,740,740,740,739,739,739,738,738,738,737,737].map((e, i) => rect(26.500, 5 + i * 3, (e - 670) / 2.306, 2.200, '#24a148') + rect(88, 5 + i * 3, 19, 2.200, '#e0474c') + txt(25, 7 + i * 3, 2.300, teamNames[(i + 5) % 12], 'end') + (i % 2 ? '' : txt((e - 600) / 2.306 + 1, 7 + i * 3, 2.600, 680 - i * 5))).join('');
$('t8').innerHTML = [8,18,28,38,48,58,68].map(y => rect(7, y, 100, .3, '#eee')).join('') + [[30,54],[42,60],[36,62],[32,58],[22,55],[38,56],[50,60],[22,52],[30,54],[26,54],[18,50],[30,54],[22,50],[6,50],[19,47],[42,60]].map(([a, b], i) => { const x = 14 + i * 6; return rect(x - .3, a, .6, 74 - a - i % 4, '#bbb') + rect(x - 1, b - 10, 2.200, 18, '#d2d2d2') + rect(x - 1.200, b - 1, 2.500, 7, '#aaa') + rect(x - 1, a, 2, .6, '#999'); }).join('') + '<text transform="translate(6 54) rotate(-90)" font-size="3">Opponent Score</text>';
$('t9').innerHTML = '<g class="strong">' + txt(3, 7, 4.200, 'NFL Team Performance Dashboard', 'start') + '</g>' + txt(3, 14, 3.500, 'Oponent Score by Team', 'start') + txt(62, 18.500, 2.600, 'Team') + Array.from({ length: 32 }, (_, i) => rect(12 + i * 3, 20 + (i * 7 % 5), .5, 20 - (i * 3 % 5), '#ccc') + rect(11.700 + i * 3, 28 + i % 3, 1.200, 4, '#aaa') + rect(12 + i * 3, 43, .8, 11 + i % 3, '#ddd')).join('') + txt(3, 62, 3.400, 'Avg Team Score vs Avg Opponent Score', 'start') + txt(57, 70, 2.800, 'New England Patriots') + rect(57, 66, 1, 1, BLUE) + rect(83, 73, 1, 1, RED);
```
